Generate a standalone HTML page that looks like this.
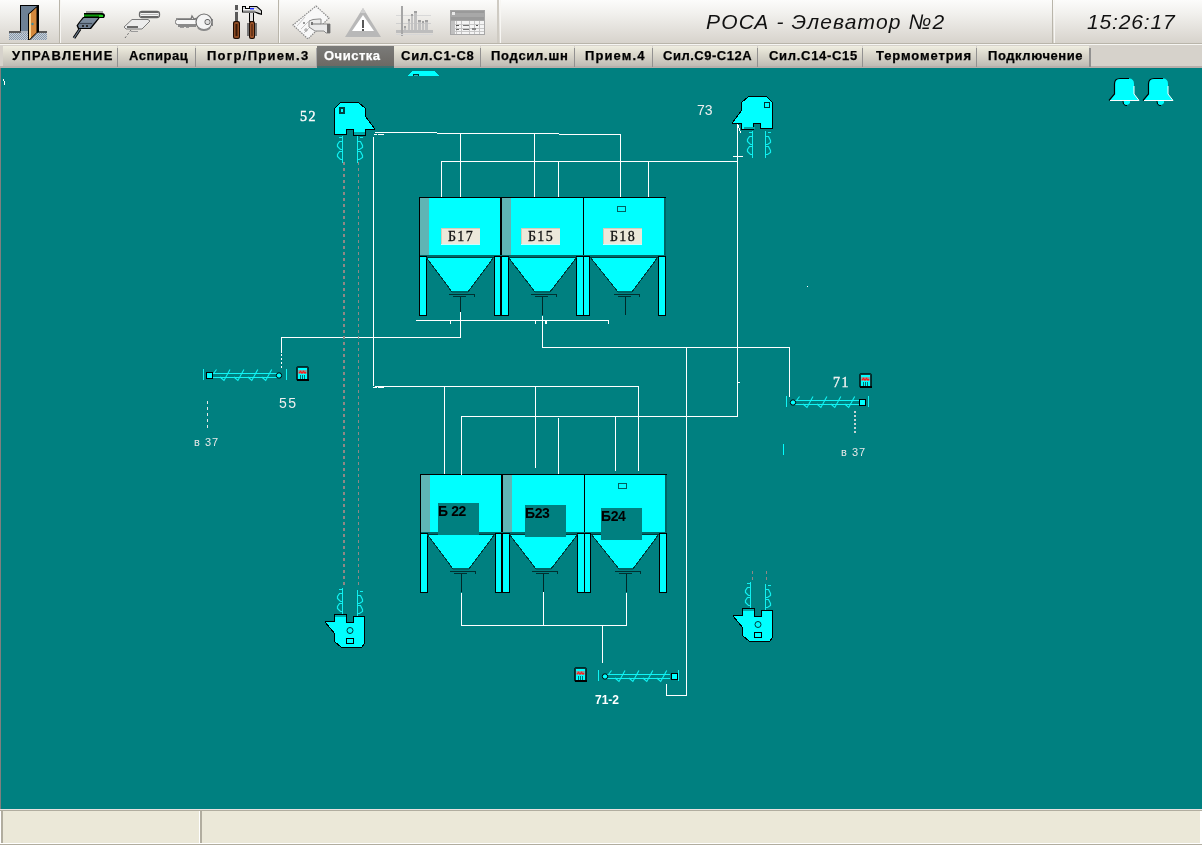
<!DOCTYPE html>
<html><head><meta charset="utf-8">
<style>
*{margin:0;padding:0;box-sizing:border-box}
html,body{width:1202px;height:848px;overflow:hidden;background:#008080;font-family:"Liberation Sans",sans-serif}
#tb{position:absolute;left:0;top:0;width:1202px;height:43px;background:linear-gradient(#fcfcfb,#f2f1ee 30%,#d7d3cc)}
#tbl1{position:absolute;left:0;top:43px;width:1202px;height:1px;background:#b9b5aa}
#tbl2{position:absolute;left:0;top:44px;width:1202px;height:1px;background:#f7f6f3}
.sep{position:absolute;top:0;width:1px;height:43px;background:#b9b5aa}
.sepw{position:absolute;top:0;width:1px;height:43px;background:#f7f6f3}
#tabs{position:absolute;left:0;top:45px;width:1202px;height:23px;background:#d6d2cb}
#tabsb{position:absolute;left:0;top:66px;width:1202px;height:2px;background:#b7afab}
.tab{position:absolute;top:46px;height:20px;background:linear-gradient(#f0eee1,#dcd9cd 40%,#bfbcb5);font-weight:bold;font-size:13px;line-height:20px;color:#000;white-space:nowrap}
.tab span{position:absolute;top:0;will-change:transform;-webkit-text-stroke:0.25px currentColor}
.tsep{position:absolute;top:48px;width:1px;height:19px;background:#929190}
.act{background:linear-gradient(#7b7b79,#6c6964);color:#fff}
#title{will-change:transform;position:absolute;left:706px;top:10px;font-style:italic;font-size:21px;letter-spacing:1.15px;color:#111;white-space:nowrap}
#clock{will-change:transform;position:absolute;left:1087px;top:10px;font-style:italic;font-size:21px;letter-spacing:0.85px;color:#111;white-space:nowrap}
#main{position:absolute;left:0;top:68px;width:1202px;height:741px;background:#008080}
#lb{position:absolute;left:0;top:68px;width:1px;height:741px;background:#7f7f7f}
#sb{position:absolute;left:0;top:809px;width:1202px;height:39px;background:#fff}
.lbl{position:absolute;color:#fff;font-size:12px;white-space:nowrap}
</style></head><body>
<div id="tb"></div>
<div id="tbl1"></div><div id="tbl2"></div>
<div class="sep" style="left:59px"></div><div class="sepw" style="left:60px"></div>
<div class="sep" style="left:278px"></div><div class="sepw" style="left:279px"></div>
<div class="sep" style="left:497px;width:2px;background:#cfcbc3"></div><div class="sepw" style="left:500px"></div>
<div class="sep" style="left:1052px"></div><div class="sepw" style="left:1054px"></div>
<div id="title">РОСА - Элеватор №2</div>
<div id="clock">15:26:17</div>

<div id="tabs"></div>
<div id="tabsb"></div>
<div class="tab" style="left:3px;width:114px"><span style="left:9px;letter-spacing:1.3px">УПРАВЛЕНИЕ</span></div><div class="tsep" style="left:117px"></div>
<div class="tab" style="left:118px;width:77px"><span style="left:11px;letter-spacing:0.55px">Аспирац</span></div><div class="tsep" style="left:195px"></div>
<div class="tab" style="left:196px;width:121px"><span style="left:11px;letter-spacing:1.28px">Погр/Прием.3</span></div>
<div class="tsep" style="left:316px;background:#a9a9a9"></div><div style="position:absolute;left:317px;top:66px;width:77px;height:2px;background:#3b7171"></div><div class="tab act" style="left:317px;width:77px"><span style="left:7px;letter-spacing:0.5px">Очистка</span></div>
<div class="tab" style="left:394px;width:86px"><span style="left:7px;letter-spacing:0.75px">Сил.С1-С8</span></div><div class="tsep" style="left:480px"></div>
<div class="tab" style="left:481px;width:93px"><span style="left:10px;letter-spacing:0.73px">Подсил.шн</span></div><div class="tsep" style="left:574px"></div>
<div class="tab" style="left:575px;width:77px"><span style="left:10px;letter-spacing:1.1px">Прием.4</span></div><div class="tsep" style="left:652px"></div>
<div class="tab" style="left:653px;width:104px"><span style="left:10px;letter-spacing:0.52px">Сил.С9-С12А</span></div><div class="tsep" style="left:757px"></div>
<div class="tab" style="left:758px;width:104px"><span style="left:11px;letter-spacing:0.7px">Сил.С14-С15</span></div><div class="tsep" style="left:862px"></div>
<div class="tab" style="left:863px;width:113px"><span style="left:13px;letter-spacing:0.9px">Термометрия</span></div><div class="tsep" style="left:976px"></div>
<div class="tab" style="left:977px;width:112px"><span style="left:11px;letter-spacing:0.58px">Подключение</span></div><div class="tsep" style="left:1089px;width:2px"></div>

<div id="main"></div>
<div id="lb"></div>
<svg id="dg" width="1202" height="848" style="position:absolute;left:0;top:0;will-change:transform" shape-rendering="crispEdges">
<rect x="419" y="197" width="247" height="60" fill="#000"/>
<rect x="420" y="198" width="245" height="57" fill="#00ffff"/>
<rect x="420" y="198" width="9" height="57" fill="#5fb5b5"/>
<rect x="502" y="198" width="9" height="57" fill="#5fb5b5"/>
<rect x="500" y="197" width="2" height="60" fill="#000"/>
<rect x="583" y="197" width="1" height="60" fill="#000"/>
<rect x="664" y="198" width="2" height="58" fill="#006464"/>
<rect x="420" y="255" width="245" height="2" fill="#006868"/>
<rect x="419" y="256" width="8" height="60" fill="#000"/>
<rect x="420" y="257" width="6" height="58" fill="#00ffff"/>
<rect x="494" y="256" width="7" height="60" fill="#000"/>
<rect x="495" y="257" width="5" height="58" fill="#00ffff"/>
<rect x="501" y="256" width="8" height="60" fill="#000"/>
<rect x="502" y="257" width="6" height="58" fill="#00ffff"/>
<rect x="576" y="256" width="8" height="60" fill="#000"/>
<rect x="577" y="257" width="6" height="58" fill="#00ffff"/>
<rect x="583" y="256" width="7" height="60" fill="#000"/>
<rect x="584" y="257" width="5" height="58" fill="#00ffff"/>
<rect x="658" y="256" width="8" height="60" fill="#000"/>
<rect x="659" y="257" width="6" height="58" fill="#00ffff"/>
<polygon points="426,257 494,257 468,292 452,292" fill="#00ffff" stroke="#003838" stroke-width="1" stroke-width="1"/>
<rect x="452" y="291" width="16" height="2" fill="#006464"/>
<rect x="449" y="294" width="26" height="1" fill="#003030"/>
<rect x="474" y="294" width="1" height="3" fill="#003030"/>
<rect x="453" y="296" width="13" height="1" fill="#003030"/>
<rect x="460" y="297" width="1" height="18" fill="#002828"/>
<polygon points="508,257 577,257 550,292 535,292" fill="#00ffff" stroke="#003838" stroke-width="1" stroke-width="1"/>
<rect x="535" y="291" width="15" height="2" fill="#006464"/>
<rect x="531" y="294" width="26" height="1" fill="#003030"/>
<rect x="556" y="294" width="1" height="3" fill="#003030"/>
<rect x="535" y="296" width="13" height="1" fill="#003030"/>
<rect x="542" y="297" width="1" height="18" fill="#002828"/>
<polygon points="590,257 658,257 632,292 618,292" fill="#00ffff" stroke="#003838" stroke-width="1" stroke-width="1"/>
<rect x="618" y="291" width="14" height="2" fill="#006464"/>
<rect x="614" y="294" width="26" height="1" fill="#003030"/>
<rect x="639" y="294" width="1" height="3" fill="#003030"/>
<rect x="618" y="296" width="13" height="1" fill="#003030"/>
<rect x="625" y="297" width="1" height="18" fill="#002828"/>
<rect x="441" y="228" width="39" height="17" fill="#d6cbb8"/>
<rect x="442" y="229" width="38" height="15" fill="#ece8da"/>
<rect x="441" y="244" width="39" height="1" fill="#c8ffff"/>
<text x="461" y="241" style="font:14px 'Liberation Serif';fill:#111;text-anchor:middle;letter-spacing:1.4px;stroke:#111;stroke-width:0.3">Б17</text>
<rect x="521" y="228" width="39" height="17" fill="#d6cbb8"/>
<rect x="522" y="229" width="38" height="15" fill="#ece8da"/>
<rect x="521" y="244" width="39" height="1" fill="#c8ffff"/>
<text x="541" y="241" style="font:14px 'Liberation Serif';fill:#111;text-anchor:middle;letter-spacing:1.4px;stroke:#111;stroke-width:0.3">Б15</text>
<rect x="603" y="228" width="39" height="17" fill="#d6cbb8"/>
<rect x="604" y="229" width="38" height="15" fill="#ece8da"/>
<rect x="603" y="244" width="39" height="1" fill="#c8ffff"/>
<text x="623" y="241" style="font:14px 'Liberation Serif';fill:#111;text-anchor:middle;letter-spacing:1.4px;stroke:#111;stroke-width:0.3">Б18</text>
<rect x="617" y="206" width="9" height="6" fill="#006060"/>
<rect x="618" y="207" width="7" height="4" fill="#00ffff"/>
<rect x="420" y="474" width="247" height="60" fill="#000"/>
<rect x="421" y="475" width="245" height="57" fill="#00ffff"/>
<rect x="421" y="475" width="9" height="57" fill="#5fb5b5"/>
<rect x="503" y="475" width="9" height="57" fill="#5fb5b5"/>
<rect x="501" y="474" width="2" height="60" fill="#000"/>
<rect x="584" y="474" width="1" height="60" fill="#000"/>
<rect x="665" y="475" width="2" height="58" fill="#006464"/>
<rect x="421" y="532" width="245" height="2" fill="#006868"/>
<rect x="420" y="533" width="8" height="60" fill="#000"/>
<rect x="421" y="534" width="6" height="58" fill="#00ffff"/>
<rect x="495" y="533" width="7" height="60" fill="#000"/>
<rect x="496" y="534" width="5" height="58" fill="#00ffff"/>
<rect x="502" y="533" width="8" height="60" fill="#000"/>
<rect x="503" y="534" width="6" height="58" fill="#00ffff"/>
<rect x="577" y="533" width="8" height="60" fill="#000"/>
<rect x="578" y="534" width="6" height="58" fill="#00ffff"/>
<rect x="584" y="533" width="7" height="60" fill="#000"/>
<rect x="585" y="534" width="5" height="58" fill="#00ffff"/>
<rect x="659" y="533" width="8" height="60" fill="#000"/>
<rect x="660" y="534" width="6" height="58" fill="#00ffff"/>
<polygon points="427,534 495,534 469,569 453,569" fill="#00ffff" stroke="#003838" stroke-width="1" stroke-width="1"/>
<rect x="453" y="568" width="16" height="2" fill="#006464"/>
<rect x="450" y="571" width="26" height="1" fill="#003030"/>
<rect x="475" y="571" width="1" height="3" fill="#003030"/>
<rect x="454" y="573" width="13" height="1" fill="#003030"/>
<rect x="461" y="574" width="1" height="18" fill="#002828"/>
<polygon points="509,534 578,534 551,569 536,569" fill="#00ffff" stroke="#003838" stroke-width="1" stroke-width="1"/>
<rect x="536" y="568" width="15" height="2" fill="#006464"/>
<rect x="532" y="571" width="26" height="1" fill="#003030"/>
<rect x="557" y="571" width="1" height="3" fill="#003030"/>
<rect x="536" y="573" width="13" height="1" fill="#003030"/>
<rect x="543" y="574" width="1" height="18" fill="#002828"/>
<polygon points="591,534 659,534 633,569 619,569" fill="#00ffff" stroke="#003838" stroke-width="1" stroke-width="1"/>
<rect x="619" y="568" width="14" height="2" fill="#006464"/>
<rect x="615" y="571" width="26" height="1" fill="#003030"/>
<rect x="640" y="571" width="1" height="3" fill="#003030"/>
<rect x="619" y="573" width="13" height="1" fill="#003030"/>
<rect x="626" y="574" width="1" height="18" fill="#002828"/>
<rect x="438" y="503" width="41" height="32" fill="#008080"/>
<text x="438" y="516" style="font:bold 14px 'Liberation Sans';fill:#000;letter-spacing:-0.4px">Б 22</text>
<rect x="525" y="505" width="41" height="32" fill="#008080"/>
<text x="525" y="518" style="font:bold 14px 'Liberation Sans';fill:#000;letter-spacing:-0.4px">Б23</text>
<rect x="601" y="508" width="41" height="32" fill="#008080"/>
<text x="601" y="521" style="font:bold 14px 'Liberation Sans';fill:#000;letter-spacing:-0.4px">Б24</text>
<rect x="618" y="483" width="9" height="6" fill="#006060"/>
<rect x="619" y="484" width="7" height="4" fill="#00ffff"/>
<rect x="375" y="132" width="62" height="1" fill="#fff"/>
<rect x="437" y="133" width="122" height="1" fill="#fff"/>
<rect x="559" y="134" width="62" height="1" fill="#fff"/>
<rect x="374" y="134" width="3" height="1" fill="#fff"/>
<rect x="378" y="134" width="6" height="1" fill="#fff"/>
<rect x="373" y="137" width="1" height="249" fill="#fff"/>
<rect x="373" y="387" width="4" height="1" fill="#fff"/>
<rect x="378" y="387" width="6" height="1" fill="#fff"/>
<rect x="375" y="386" width="264" height="1" fill="#fff"/>
<rect x="460" y="133" width="1" height="64" fill="#fff"/>
<rect x="441" y="161" width="1" height="36" fill="#fff"/>
<rect x="441" y="161" width="296" height="1" fill="#fff"/>
<rect x="534" y="133" width="1" height="64" fill="#fff"/>
<rect x="558" y="161" width="1" height="36" fill="#fff"/>
<rect x="620" y="135" width="1" height="62" fill="#fff"/>
<rect x="648" y="161" width="1" height="36" fill="#fff"/>
<rect x="737" y="124" width="1" height="293" fill="#fff"/>
<rect x="733" y="156" width="10" height="1" fill="#fff"/>
<rect x="738" y="125" width="1" height="3" fill="#fff"/>
<rect x="739" y="128" width="1" height="3" fill="#fff"/>
<rect x="740" y="131" width="1" height="2" fill="#fff"/>
<rect x="416" y="320" width="193" height="1" fill="#fff"/>
<rect x="608" y="321" width="1" height="3" fill="#fff"/>
<rect x="450" y="321" width="1" height="3" fill="#fff"/>
<rect x="535" y="321" width="1" height="3" fill="#fff"/>
<rect x="545" y="321" width="1" height="3" fill="#fff"/>
<rect x="546" y="321" width="1" height="3" fill="#fff"/>
<rect x="460" y="312" width="1" height="26" fill="#fff"/>
<rect x="281" y="337" width="180" height="1" fill="#fff"/>
<rect x="281" y="338" width="1" height="15" fill="#fff"/>
<rect x="281" y="354" width="1" height="2" fill="#fff"/>
<rect x="281" y="358" width="1" height="2" fill="#fff"/>
<rect x="281" y="362" width="1" height="2" fill="#fff"/>
<rect x="281" y="366" width="1" height="2" fill="#fff"/>
<rect x="542" y="316" width="1" height="32" fill="#fff"/>
<rect x="542" y="347" width="248" height="1" fill="#fff"/>
<rect x="789" y="348" width="1" height="49" fill="#fff"/>
<rect x="444" y="387" width="1" height="87" fill="#fff"/>
<rect x="535" y="387" width="1" height="81" fill="#fff"/>
<rect x="638" y="387" width="1" height="84" fill="#fff"/>
<rect x="461" y="416" width="276" height="1" fill="#fff"/>
<rect x="461" y="417" width="1" height="58" fill="#fff"/>
<rect x="558" y="418" width="1" height="56" fill="#fff"/>
<rect x="615" y="417" width="1" height="54" fill="#fff"/>
<rect x="686" y="348" width="1" height="348" fill="#fff"/>
<rect x="666" y="695" width="21" height="1" fill="#fff"/>
<rect x="666" y="684" width="1" height="11" fill="#fff"/>
<rect x="738" y="382" width="2" height="1" fill="#fff"/>
<rect x="461" y="593" width="1" height="33" fill="#fff"/>
<rect x="543" y="592" width="1" height="34" fill="#fff"/>
<rect x="626" y="593" width="1" height="33" fill="#fff"/>
<rect x="461" y="625" width="166" height="1" fill="#fff"/>
<rect x="602" y="626" width="1" height="37" fill="#fff"/>
<rect x="207" y="401" width="1" height="3" fill="#e8e8e8"/>
<rect x="207" y="407" width="1" height="3" fill="#e8e8e8"/>
<rect x="207" y="413" width="1" height="3" fill="#e8e8e8"/>
<rect x="207" y="419" width="1" height="3" fill="#e8e8e8"/>
<rect x="207" y="425" width="1" height="3" fill="#e8e8e8"/>
<rect x="854" y="411" width="2" height="2" fill="#c8d4d4"/>
<rect x="854" y="415" width="2" height="2" fill="#c8d4d4"/>
<rect x="854" y="419" width="2" height="2" fill="#c8d4d4"/>
<rect x="854" y="423" width="2" height="2" fill="#c8d4d4"/>
<rect x="854" y="427" width="2" height="2" fill="#c8d4d4"/>
<rect x="854" y="431" width="2" height="2" fill="#c8d4d4"/>
<rect x="343" y="162" width="2" height="3" fill="#8e8886"/>
<rect x="358" y="162" width="1" height="3" fill="#8e8886"/>
<rect x="343" y="168" width="2" height="3" fill="#8e8886"/>
<rect x="358" y="168" width="1" height="3" fill="#8e8886"/>
<rect x="343" y="174" width="2" height="3" fill="#8e8886"/>
<rect x="358" y="174" width="1" height="3" fill="#8e8886"/>
<rect x="343" y="180" width="2" height="3" fill="#8e8886"/>
<rect x="358" y="180" width="1" height="3" fill="#8e8886"/>
<rect x="343" y="186" width="2" height="3" fill="#8e8886"/>
<rect x="358" y="186" width="1" height="3" fill="#8e8886"/>
<rect x="343" y="192" width="2" height="3" fill="#8e8886"/>
<rect x="358" y="192" width="1" height="3" fill="#8e8886"/>
<rect x="343" y="198" width="2" height="3" fill="#8e8886"/>
<rect x="358" y="198" width="1" height="3" fill="#8e8886"/>
<rect x="343" y="204" width="2" height="3" fill="#8e8886"/>
<rect x="358" y="204" width="1" height="3" fill="#8e8886"/>
<rect x="343" y="210" width="2" height="3" fill="#8e8886"/>
<rect x="358" y="210" width="1" height="3" fill="#8e8886"/>
<rect x="343" y="216" width="2" height="3" fill="#8e8886"/>
<rect x="358" y="216" width="1" height="3" fill="#8e8886"/>
<rect x="343" y="222" width="2" height="3" fill="#8e8886"/>
<rect x="358" y="222" width="1" height="3" fill="#8e8886"/>
<rect x="343" y="228" width="2" height="3" fill="#8e8886"/>
<rect x="358" y="228" width="1" height="3" fill="#8e8886"/>
<rect x="343" y="234" width="2" height="3" fill="#8e8886"/>
<rect x="358" y="234" width="1" height="3" fill="#8e8886"/>
<rect x="343" y="240" width="2" height="3" fill="#8e8886"/>
<rect x="358" y="240" width="1" height="3" fill="#8e8886"/>
<rect x="343" y="246" width="2" height="3" fill="#8e8886"/>
<rect x="358" y="246" width="1" height="3" fill="#8e8886"/>
<rect x="343" y="252" width="2" height="3" fill="#8e8886"/>
<rect x="358" y="252" width="1" height="3" fill="#8e8886"/>
<rect x="343" y="258" width="2" height="3" fill="#8e8886"/>
<rect x="358" y="258" width="1" height="3" fill="#8e8886"/>
<rect x="343" y="264" width="2" height="3" fill="#8e8886"/>
<rect x="358" y="264" width="1" height="3" fill="#8e8886"/>
<rect x="343" y="270" width="2" height="3" fill="#8e8886"/>
<rect x="358" y="270" width="1" height="3" fill="#8e8886"/>
<rect x="343" y="276" width="2" height="3" fill="#8e8886"/>
<rect x="358" y="276" width="1" height="3" fill="#8e8886"/>
<rect x="343" y="282" width="2" height="3" fill="#8e8886"/>
<rect x="358" y="282" width="1" height="3" fill="#8e8886"/>
<rect x="343" y="288" width="2" height="3" fill="#8e8886"/>
<rect x="358" y="288" width="1" height="3" fill="#8e8886"/>
<rect x="343" y="294" width="2" height="3" fill="#8e8886"/>
<rect x="358" y="294" width="1" height="3" fill="#8e8886"/>
<rect x="343" y="300" width="2" height="3" fill="#8e8886"/>
<rect x="358" y="300" width="1" height="3" fill="#8e8886"/>
<rect x="343" y="306" width="2" height="3" fill="#8e8886"/>
<rect x="358" y="306" width="1" height="3" fill="#8e8886"/>
<rect x="343" y="312" width="2" height="3" fill="#8e8886"/>
<rect x="358" y="312" width="1" height="3" fill="#8e8886"/>
<rect x="343" y="318" width="2" height="3" fill="#8e8886"/>
<rect x="358" y="318" width="1" height="3" fill="#8e8886"/>
<rect x="343" y="324" width="2" height="3" fill="#8e8886"/>
<rect x="358" y="324" width="1" height="3" fill="#8e8886"/>
<rect x="343" y="330" width="2" height="3" fill="#8e8886"/>
<rect x="358" y="330" width="1" height="3" fill="#8e8886"/>
<rect x="343" y="336" width="2" height="3" fill="#8e8886"/>
<rect x="358" y="336" width="1" height="3" fill="#8e8886"/>
<rect x="343" y="342" width="2" height="3" fill="#8e8886"/>
<rect x="358" y="342" width="1" height="3" fill="#8e8886"/>
<rect x="343" y="348" width="2" height="3" fill="#8e8886"/>
<rect x="358" y="348" width="1" height="3" fill="#8e8886"/>
<rect x="343" y="354" width="2" height="3" fill="#8e8886"/>
<rect x="358" y="354" width="1" height="3" fill="#8e8886"/>
<rect x="343" y="360" width="2" height="3" fill="#8e8886"/>
<rect x="358" y="360" width="1" height="3" fill="#8e8886"/>
<rect x="343" y="366" width="2" height="3" fill="#8e8886"/>
<rect x="358" y="366" width="1" height="3" fill="#8e8886"/>
<rect x="343" y="372" width="2" height="3" fill="#8e8886"/>
<rect x="358" y="372" width="1" height="3" fill="#8e8886"/>
<rect x="343" y="378" width="2" height="3" fill="#8e8886"/>
<rect x="358" y="378" width="1" height="3" fill="#8e8886"/>
<rect x="343" y="384" width="2" height="3" fill="#8e8886"/>
<rect x="358" y="384" width="1" height="3" fill="#8e8886"/>
<rect x="343" y="390" width="2" height="3" fill="#8e8886"/>
<rect x="358" y="390" width="1" height="3" fill="#8e8886"/>
<rect x="343" y="396" width="2" height="3" fill="#8e8886"/>
<rect x="358" y="396" width="1" height="3" fill="#8e8886"/>
<rect x="343" y="402" width="2" height="3" fill="#8e8886"/>
<rect x="358" y="402" width="1" height="3" fill="#8e8886"/>
<rect x="343" y="408" width="2" height="3" fill="#8e8886"/>
<rect x="358" y="408" width="1" height="3" fill="#8e8886"/>
<rect x="343" y="414" width="2" height="3" fill="#8e8886"/>
<rect x="358" y="414" width="1" height="3" fill="#8e8886"/>
<rect x="343" y="420" width="2" height="3" fill="#8e8886"/>
<rect x="358" y="420" width="1" height="3" fill="#8e8886"/>
<rect x="343" y="426" width="2" height="3" fill="#8e8886"/>
<rect x="358" y="426" width="1" height="3" fill="#8e8886"/>
<rect x="343" y="432" width="2" height="3" fill="#8e8886"/>
<rect x="358" y="432" width="1" height="3" fill="#8e8886"/>
<rect x="343" y="438" width="2" height="3" fill="#8e8886"/>
<rect x="358" y="438" width="1" height="3" fill="#8e8886"/>
<rect x="343" y="444" width="2" height="3" fill="#8e8886"/>
<rect x="358" y="444" width="1" height="3" fill="#8e8886"/>
<rect x="343" y="450" width="2" height="3" fill="#8e8886"/>
<rect x="358" y="450" width="1" height="3" fill="#8e8886"/>
<rect x="343" y="456" width="2" height="3" fill="#8e8886"/>
<rect x="358" y="456" width="1" height="3" fill="#8e8886"/>
<rect x="343" y="462" width="2" height="3" fill="#8e8886"/>
<rect x="358" y="462" width="1" height="3" fill="#8e8886"/>
<rect x="343" y="468" width="2" height="3" fill="#8e8886"/>
<rect x="358" y="468" width="1" height="3" fill="#8e8886"/>
<rect x="343" y="474" width="2" height="3" fill="#8e8886"/>
<rect x="358" y="474" width="1" height="3" fill="#8e8886"/>
<rect x="343" y="480" width="2" height="3" fill="#8e8886"/>
<rect x="358" y="480" width="1" height="3" fill="#8e8886"/>
<rect x="343" y="486" width="2" height="3" fill="#8e8886"/>
<rect x="358" y="486" width="1" height="3" fill="#8e8886"/>
<rect x="343" y="492" width="2" height="3" fill="#8e8886"/>
<rect x="358" y="492" width="1" height="3" fill="#8e8886"/>
<rect x="343" y="498" width="2" height="3" fill="#8e8886"/>
<rect x="358" y="498" width="1" height="3" fill="#8e8886"/>
<rect x="343" y="504" width="2" height="3" fill="#8e8886"/>
<rect x="358" y="504" width="1" height="3" fill="#8e8886"/>
<rect x="343" y="510" width="2" height="3" fill="#8e8886"/>
<rect x="358" y="510" width="1" height="3" fill="#8e8886"/>
<rect x="343" y="516" width="2" height="3" fill="#8e8886"/>
<rect x="358" y="516" width="1" height="3" fill="#8e8886"/>
<rect x="343" y="522" width="2" height="3" fill="#8e8886"/>
<rect x="358" y="522" width="1" height="3" fill="#8e8886"/>
<rect x="343" y="528" width="2" height="3" fill="#8e8886"/>
<rect x="358" y="528" width="1" height="3" fill="#8e8886"/>
<rect x="343" y="534" width="2" height="3" fill="#8e8886"/>
<rect x="358" y="534" width="1" height="3" fill="#8e8886"/>
<rect x="343" y="540" width="2" height="3" fill="#8e8886"/>
<rect x="358" y="540" width="1" height="3" fill="#8e8886"/>
<rect x="343" y="546" width="2" height="3" fill="#8e8886"/>
<rect x="358" y="546" width="1" height="3" fill="#8e8886"/>
<rect x="343" y="552" width="2" height="3" fill="#8e8886"/>
<rect x="358" y="552" width="1" height="3" fill="#8e8886"/>
<rect x="343" y="558" width="2" height="3" fill="#8e8886"/>
<rect x="358" y="558" width="1" height="3" fill="#8e8886"/>
<rect x="343" y="564" width="2" height="3" fill="#8e8886"/>
<rect x="358" y="564" width="1" height="3" fill="#8e8886"/>
<rect x="343" y="570" width="2" height="3" fill="#8e8886"/>
<rect x="358" y="570" width="1" height="3" fill="#8e8886"/>
<rect x="343" y="576" width="2" height="3" fill="#8e8886"/>
<rect x="358" y="576" width="1" height="3" fill="#8e8886"/>
<rect x="343" y="582" width="2" height="3" fill="#8e8886"/>
<rect x="358" y="582" width="1" height="3" fill="#8e8886"/>
<rect x="752" y="571" width="1" height="3" fill="#8e8886"/>
<rect x="766" y="571" width="1" height="3" fill="#8e8886"/>
<rect x="752" y="577" width="1" height="3" fill="#8e8886"/>
<rect x="766" y="577" width="1" height="3" fill="#8e8886"/>
<polygon points="340.5,102.5 358.5,102.5 365.5,108.5 365.5,116.5 374.5,128.5 374.5,129.5 365.5,129.5 365.5,135.5 353.5,135.5 353.5,129.5 346.5,129.5 346.5,134.5 334.5,134.5 334.5,108.5" fill="#00ffff" stroke="#000" stroke-width="1" />
<rect x="354" y="132" width="11" height="3" fill="#00a8a8"/>
<rect x="339" y="107" width="6" height="7" fill="#004040"/>
<rect x="341" y="109" width="2" height="3" fill="#00ffff"/>
<polygon points="766.5,96.5 748.5,96.5 741.5,102.5 741.5,110.5 732.5,122.5 732.5,123.5 741.5,123.5 741.5,129.5 753.5,129.5 753.5,123.5 760.5,123.5 760.5,128.5 772.5,128.5 772.5,102.5" fill="#00ffff" stroke="#000" stroke-width="1" />
<rect x="744" y="127" width="11" height="2" fill="#00a8a8"/>
<rect x="764" y="102" width="6" height="6" fill="#003030"/>
<rect x="765" y="103" width="4" height="4" fill="#00ffff"/>
<rect x="342" y="136" width="1" height="27" fill="#10f0f0"/>
<path d="M342.5,141.5 L339.5,141.5 L337.5,144.5 L337.5,146.5 L340.5,149.5 L342.5,149.5" fill="none" stroke="#10f0f0" stroke-width="1.2" shape-rendering="auto"/>
<path d="M342.5,151.5 L339.5,151.5 L337.5,154.5 L337.5,156.5 L340.5,159.5 L342.5,159.5" fill="none" stroke="#10f0f0" stroke-width="1.2" shape-rendering="auto"/>
<rect x="339" y="137" width="3" height="1" fill="#10f0f0"/>
<rect x="357" y="136" width="1" height="27" fill="#10f0f0"/>
<path d="M357.5,141.5 L360.5,141.5 L362.5,145.5 L362.5,147.5 L359.5,149.5 L357.5,149.5" fill="none" stroke="#10f0f0" stroke-width="1.2" shape-rendering="auto"/>
<path d="M357.5,151.5 L360.5,151.5 L362.5,155.5 L362.5,157.5 L359.5,159.5 L357.5,159.5" fill="none" stroke="#10f0f0" stroke-width="1.2" shape-rendering="auto"/>
<rect x="360" y="137" width="3" height="1" fill="#10f0f0"/>
<rect x="752" y="131" width="1" height="27" fill="#10f0f0"/>
<path d="M752.5,136.5 L749.5,136.5 L747.5,139.5 L747.5,141.5 L750.5,144.5 L752.5,144.5" fill="none" stroke="#10f0f0" stroke-width="1.2" shape-rendering="auto"/>
<path d="M752.5,146.5 L749.5,146.5 L747.5,149.5 L747.5,151.5 L750.5,154.5 L752.5,154.5" fill="none" stroke="#10f0f0" stroke-width="1.2" shape-rendering="auto"/>
<rect x="749" y="132" width="3" height="1" fill="#10f0f0"/>
<rect x="765" y="131" width="1" height="27" fill="#10f0f0"/>
<path d="M765.5,136.5 L768.5,136.5 L770.5,140.5 L770.5,142.5 L767.5,144.5 L765.5,144.5" fill="none" stroke="#10f0f0" stroke-width="1.2" shape-rendering="auto"/>
<path d="M765.5,146.5 L768.5,146.5 L770.5,150.5 L770.5,152.5 L767.5,154.5 L765.5,154.5" fill="none" stroke="#10f0f0" stroke-width="1.2" shape-rendering="auto"/>
<rect x="768" y="132" width="3" height="1" fill="#10f0f0"/>
<rect x="342" y="588" width="1" height="27" fill="#10f0f0"/>
<path d="M342.5,593.5 L339.5,593.5 L337.5,596.5 L337.5,598.5 L340.5,601.5 L342.5,601.5" fill="none" stroke="#10f0f0" stroke-width="1.2" shape-rendering="auto"/>
<path d="M342.5,603.5 L339.5,603.5 L337.5,606.5 L337.5,608.5 L340.5,611.5 L342.5,611.5" fill="none" stroke="#10f0f0" stroke-width="1.2" shape-rendering="auto"/>
<rect x="339" y="589" width="3" height="1" fill="#10f0f0"/>
<rect x="357" y="590" width="1" height="27" fill="#10f0f0"/>
<path d="M357.5,595.5 L360.5,595.5 L362.5,599.5 L362.5,601.5 L359.5,603.5 L357.5,603.5" fill="none" stroke="#10f0f0" stroke-width="1.2" shape-rendering="auto"/>
<path d="M357.5,605.5 L360.5,605.5 L362.5,609.5 L362.5,611.5 L359.5,613.5 L357.5,613.5" fill="none" stroke="#10f0f0" stroke-width="1.2" shape-rendering="auto"/>
<rect x="360" y="591" width="3" height="1" fill="#10f0f0"/>
<rect x="750" y="582" width="1" height="27" fill="#10f0f0"/>
<path d="M750.5,587.5 L747.5,587.5 L745.5,590.5 L745.5,592.5 L748.5,595.5 L750.5,595.5" fill="none" stroke="#10f0f0" stroke-width="1.2" shape-rendering="auto"/>
<path d="M750.5,597.5 L747.5,597.5 L745.5,600.5 L745.5,602.5 L748.5,605.5 L750.5,605.5" fill="none" stroke="#10f0f0" stroke-width="1.2" shape-rendering="auto"/>
<rect x="747" y="583" width="3" height="1" fill="#10f0f0"/>
<rect x="765" y="584" width="1" height="27" fill="#10f0f0"/>
<path d="M765.5,589.5 L768.5,589.5 L770.5,593.5 L770.5,595.5 L767.5,597.5 L765.5,597.5" fill="none" stroke="#10f0f0" stroke-width="1.2" shape-rendering="auto"/>
<path d="M765.5,599.5 L768.5,599.5 L770.5,603.5 L770.5,605.5 L767.5,607.5 L765.5,607.5" fill="none" stroke="#10f0f0" stroke-width="1.2" shape-rendering="auto"/>
<rect x="768" y="585" width="3" height="1" fill="#10f0f0"/>
<polygon points="334.5,614.5 346.5,614.5 346.5,622.5 353.5,622.5 353.5,616.5 364.5,616.5 364.5,643.5 361.5,647.5 341.5,647.5 334.5,641.5 334.5,633.5 325.5,622.5 325.5,621.5 334.5,621.5" fill="#00ffff" stroke="#000" stroke-width="1" />
<rect x="335" y="615" width="11" height="2" fill="#00a8a8"/>
<circle cx="350" cy="630.5" r="3" fill="#00ffff" stroke="#003838" stroke-width="1" shape-rendering="auto"/>
<rect x="346.5" y="638.5" width="7" height="5" fill="#00ffff" stroke="#000" stroke-width="1"/>
<polygon points="742.5,608.5 754.5,608.5 754.5,616.5 761.5,616.5 761.5,610.5 772.5,610.5 772.5,637.5 769.5,641.5 749.5,641.5 742.5,635.5 742.5,627.5 733.5,616.5 733.5,615.5 742.5,615.5" fill="#00ffff" stroke="#000" stroke-width="1" />
<rect x="743" y="609" width="11" height="2" fill="#00a8a8"/>
<circle cx="758" cy="624.5" r="3" fill="#00ffff" stroke="#003838" stroke-width="1" shape-rendering="auto"/>
<rect x="754.5" y="632.5" width="7" height="5" fill="#00ffff" stroke="#000" stroke-width="1"/>
<rect x="203" y="369" width="1" height="11" fill="#10f4f4"/>
<rect x="286" y="369" width="1" height="11" fill="#10f4f4"/>
<rect x="211" y="373" width="67" height="1" fill="#10f4f4"/>
<rect x="211" y="377" width="67" height="1" fill="#10f4f4"/>
<path d="M213.5,373.5 L216.5,369.5" stroke="#10f4f4" stroke-width="1.1" fill="none" shape-rendering="auto"/>
<path d="M220.0,377 L224.0,380.5 L230.0,369.5" stroke="#10f4f4" stroke-width="1.1" fill="none" shape-rendering="auto"/>
<path d="M233.9,377 L237.9,380.5 L243.9,369.5" stroke="#10f4f4" stroke-width="1.1" fill="none" shape-rendering="auto"/>
<path d="M247.8,377 L251.8,380.5 L257.8,369.5" stroke="#10f4f4" stroke-width="1.1" fill="none" shape-rendering="auto"/>
<path d="M261.7,377 L265.7,380.5 L271.7,369.5" stroke="#10f4f4" stroke-width="1.1" fill="none" shape-rendering="auto"/>
<rect x="206" y="372" width="7" height="7" fill="#000"/>
<rect x="207" y="373" width="5" height="5" fill="#00ffff"/>
<circle cx="279" cy="375.5" r="2.7" fill="#00ffff" stroke="#000" stroke-width="1" shape-rendering="auto"/>
<rect x="786" y="396" width="1" height="11" fill="#10f4f4"/>
<rect x="868" y="396" width="1" height="11" fill="#10f4f4"/>
<rect x="794" y="400" width="66" height="1" fill="#10f4f4"/>
<rect x="794" y="404" width="66" height="1" fill="#10f4f4"/>
<path d="M796.5,400.5 L799.5,396.5" stroke="#10f4f4" stroke-width="1.1" fill="none" shape-rendering="auto"/>
<path d="M803.0,404 L807.0,407.5 L813.0,396.5" stroke="#10f4f4" stroke-width="1.1" fill="none" shape-rendering="auto"/>
<path d="M816.9,404 L820.9,407.5 L826.9,396.5" stroke="#10f4f4" stroke-width="1.1" fill="none" shape-rendering="auto"/>
<path d="M830.8,404 L834.8,407.5 L840.8,396.5" stroke="#10f4f4" stroke-width="1.1" fill="none" shape-rendering="auto"/>
<path d="M844.7,404 L848.7,407.5 L854.7,396.5" stroke="#10f4f4" stroke-width="1.1" fill="none" shape-rendering="auto"/>
<rect x="859" y="399" width="7" height="7" fill="#000"/>
<rect x="860" y="400" width="5" height="5" fill="#00ffff"/>
<circle cx="793" cy="402.5" r="2.7" fill="#00ffff" stroke="#000" stroke-width="1" shape-rendering="auto"/>
<rect x="598" y="670" width="1" height="11" fill="#10f4f4"/>
<rect x="678" y="670" width="1" height="11" fill="#10f4f4"/>
<rect x="606" y="674" width="64" height="1" fill="#10f4f4"/>
<rect x="606" y="678" width="64" height="1" fill="#10f4f4"/>
<path d="M608.5,674.5 L611.5,670.5" stroke="#10f4f4" stroke-width="1.1" fill="none" shape-rendering="auto"/>
<path d="M615.0,678 L619.0,681.5 L625.0,670.5" stroke="#10f4f4" stroke-width="1.1" fill="none" shape-rendering="auto"/>
<path d="M628.9,678 L632.9,681.5 L638.9,670.5" stroke="#10f4f4" stroke-width="1.1" fill="none" shape-rendering="auto"/>
<path d="M642.8,678 L646.8,681.5 L652.8,670.5" stroke="#10f4f4" stroke-width="1.1" fill="none" shape-rendering="auto"/>
<path d="M656.7,678 L660.7,681.5 L666.7,670.5" stroke="#10f4f4" stroke-width="1.1" fill="none" shape-rendering="auto"/>
<rect x="671" y="673" width="7" height="7" fill="#000"/>
<rect x="672" y="674" width="5" height="5" fill="#00ffff"/>
<circle cx="605" cy="676.5" r="2.7" fill="#00ffff" stroke="#000" stroke-width="1" shape-rendering="auto"/>
<rect x="296.5" y="366.5" width="12" height="14" rx="1.5" fill="#0a3a3a" stroke="#002a2a" stroke-width="1" shape-rendering="auto"/>
<rect x="298" y="368" width="9" height="2" fill="#00ffff"/>
<rect x="298" y="370" width="9" height="4" fill="#70b4b4"/>
<rect x="299" y="370" width="7" height="1" fill="#909898"/>
<path d="M299,373 L300.5,371.5 L302,373 L303.5,371.5 L305,373 L306,372" stroke="#ff1818" fill="none" stroke-width="1.3" shape-rendering="auto"/>
<rect x="298" y="374" width="9" height="5" fill="#00ffff"/>
<rect x="300" y="375" width="1" height="4" fill="#0a6a6a"/>
<rect x="302" y="375" width="1" height="4" fill="#0a6a6a"/>
<rect x="304" y="375" width="1" height="4" fill="#0a6a6a"/>
<rect x="297" y="379" width="12" height="2" fill="#000"/>
<rect x="859.5" y="373.5" width="12" height="14" rx="1.5" fill="#0a3a3a" stroke="#002a2a" stroke-width="1" shape-rendering="auto"/>
<rect x="861" y="375" width="9" height="2" fill="#00ffff"/>
<rect x="861" y="377" width="9" height="4" fill="#70b4b4"/>
<rect x="862" y="377" width="7" height="1" fill="#909898"/>
<path d="M862,380 L863.5,378.5 L865,380 L866.5,378.5 L868,380 L869,379" stroke="#ff1818" fill="none" stroke-width="1.3" shape-rendering="auto"/>
<rect x="861" y="381" width="9" height="5" fill="#00ffff"/>
<rect x="863" y="382" width="1" height="4" fill="#0a6a6a"/>
<rect x="865" y="382" width="1" height="4" fill="#0a6a6a"/>
<rect x="867" y="382" width="1" height="4" fill="#0a6a6a"/>
<rect x="860" y="386" width="12" height="2" fill="#000"/>
<rect x="574.5" y="667.5" width="12" height="14" rx="1.5" fill="#0a3a3a" stroke="#002a2a" stroke-width="1" shape-rendering="auto"/>
<rect x="576" y="669" width="9" height="2" fill="#00ffff"/>
<rect x="576" y="671" width="9" height="4" fill="#70b4b4"/>
<rect x="577" y="671" width="7" height="1" fill="#909898"/>
<path d="M577,674 L578.5,672.5 L580,674 L581.5,672.5 L583,674 L584,673" stroke="#ff1818" fill="none" stroke-width="1.3" shape-rendering="auto"/>
<rect x="576" y="675" width="9" height="5" fill="#00ffff"/>
<rect x="578" y="676" width="1" height="4" fill="#0a6a6a"/>
<rect x="580" y="676" width="1" height="4" fill="#0a6a6a"/>
<rect x="582" y="676" width="1" height="4" fill="#0a6a6a"/>
<rect x="575" y="680" width="12" height="2" fill="#000"/>
<text x="300" y="121" style="font:14px 'Liberation Serif';fill:#fafafa;letter-spacing:1.5px;stroke:#fafafa;stroke-width:0.4">52</text>
<text x="697" y="115" style="font:14px 'Liberation Sans';fill:#eee">73</text>
<text x="279" y="408" style="font:14px 'Liberation Sans';fill:#eee;letter-spacing:1.5px">55</text>
<text x="833" y="387" style="font:14px 'Liberation Serif';fill:#f0f0f0;letter-spacing:1.5px;stroke:#f0f0f0;stroke-width:0.4">71</text>
<text x="595" y="704" style="font:bold 12px 'Liberation Sans';fill:#fff">71-2</text>
<text x="194" y="446" style="font:11px 'Liberation Sans';fill:#e8e8e8;letter-spacing:1px">в 37</text>
<text x="841" y="456" style="font:11px 'Liberation Sans';fill:#e8e8e8;letter-spacing:1px">в 37</text>
<rect x="783" y="444" width="1" height="11" fill="#00ffff"/>
<rect x="807" y="286" width="1" height="1" fill="#fff"/>
<rect x="3" y="79" width="1" height="2" fill="#fff"/>
<rect x="4" y="81" width="1" height="4" fill="#fff"/>
<polygon points="408,76 412,71 434,71 440,76" fill="#00ffff" />
<rect x="413" y="74" width="6" height="2" fill="#003838"/>
<rect x="414" y="75" width="4" height="1" fill="#30b0b0"/>
<path d="M1109,100.5 L1114.5,94 L1114.5,84 Q1114.5,78.5 1120,78.5 L1129,78.5 Q1134,78.5 1134,84 L1134,94 L1139,100.5 Z" fill="#00ffff" stroke="none" shape-rendering="auto"/>
<path d="M1109,100.5 L1114.5,94 L1114.5,84 Q1114.5,78.5 1120,78.5 L1129,78.5" fill="none" stroke="#000" stroke-width="1.2" shape-rendering="auto"/>
<path d="M1134,86 L1134,94 L1139,100.5 L1110,100.5" fill="none" stroke="#fff" stroke-width="1" shape-rendering="auto"/>
<path d="M1123,101 L1130,101 L1130,103 Q1127,106.5 1124,104 L1123,101 Z" fill="#00ffff" stroke="none" shape-rendering="auto"/>
<path d="M1123,101 L1123.5,104 Q1125,106 1127,105.5" fill="none" stroke="#000" stroke-width="1" shape-rendering="auto"/>
<path d="M1143,100.5 L1148.5,94 L1148.5,84 Q1148.5,78.5 1154,78.5 L1163,78.5 Q1168,78.5 1168,84 L1168,94 L1173,100.5 Z" fill="#00ffff" stroke="none" shape-rendering="auto"/>
<path d="M1143,100.5 L1148.5,94 L1148.5,84 Q1148.5,78.5 1154,78.5 L1163,78.5" fill="none" stroke="#000" stroke-width="1.2" shape-rendering="auto"/>
<path d="M1168,86 L1168,94 L1173,100.5 L1144,100.5" fill="none" stroke="#fff" stroke-width="1" shape-rendering="auto"/>
<path d="M1157,101 L1164,101 L1164,103 Q1161,106.5 1158,104 L1157,101 Z" fill="#00ffff" stroke="none" shape-rendering="auto"/>
<path d="M1157,101 L1157.5,104 Q1159,106 1161,105.5" fill="none" stroke="#000" stroke-width="1" shape-rendering="auto"/>

</svg>
<svg width="500" height="43" style="position:absolute;left:0;top:0">
<rect x="20" y="5" width="19" height="27" fill="#000"/>
<rect x="21" y="6" width="17" height="25" fill="#6d8195"/>
<defs><pattern id="chk" width="2" height="2" patternUnits="userSpaceOnUse"><rect width="2" height="2" fill="#c8d0d8"/><rect width="1" height="1" fill="#8798aa"/><rect x="1" y="1" width="1" height="1" fill="#8798aa"/></pattern></defs>
<rect x="9" y="33" width="38" height="7" fill="url(#chk)"/>
<rect x="9" y="31" width="38" height="2" fill="#585858"/>
<rect x="21" y="31" width="8" height="2" fill="#aab4be"/>
<polygon points="28,14 37,6 39,6 39,32 37,33 30,40 28,40" fill="#000"/>
<polygon points="29,14.5 36.5,7.5 36.5,32.5 29,39.5" fill="#d4883c"/>
<polygon points="29,14.5 31,12.7 31,37.6 29,39.5" fill="#f8d494"/>
<circle cx="32.5" cy="24" r="1.2" fill="#3a8a9a"/>
<rect x="86" y="11" width="17" height="2" fill="#a4a4a4"/>
<path d="M84,13 L102,13 Q105,13 105,16 L104,18 L84,18 Z" fill="#000"/>
<path d="M84,14.5 L101,14.5 Q103.5,14.5 103.5,16.5 L84,16.5 Z" fill="#0a9a0a"/>
<rect x="99" y="15" width="4" height="2" fill="#20d020"/>
<polygon points="83,17 100,17 99,19 91,29 78,29 76.5,25.5 79,22" fill="#000"/>
<polygon points="84,18 98,18 90,28 79,28 78,25.5 80,22.5" fill="#6d7d8f"/>
<polygon points="84,18 98,18 94,22.5 80,22.5" fill="#7a8a9c"/>
<rect x="79" y="23" width="13" height="1" fill="#3e4854"/>
<rect x="82" y="25" width="2" height="2" fill="#2a2a2a"/><rect x="86" y="25" width="2" height="2" fill="#2a2a2a"/>
<path d="M80,29 L74,38" stroke="#000" stroke-width="3"/>
<path d="M80,29 L74,38" stroke="#6c7c8e" stroke-width="1.2"/>
<rect x="139.5" y="11.5" width="20" height="6" rx="2.5" fill="#f4f4f4" stroke="#6a6a6a" stroke-width="1.3"/>
<rect x="141" y="11" width="17" height="2" fill="#666"/><rect x="141" y="16" width="17" height="2" fill="#666"/>
<rect x="141" y="14" width="17" height="1" fill="#bbb" stroke-dasharray="1,1"/>
<polygon points="132,19.5 148,19.5 150,21 142,29 126,29 124,27" fill="#ececec" stroke="#7a7a7a" stroke-width="1"/>
<rect x="127" y="26" width="11" height="2" fill="#6a6a6a"/>
<rect x="131" y="31" width="7" height="1" fill="#9a9a9a"/>
<path d="M131,30 L125,38" stroke="#6a6a6a" stroke-width="1" stroke-dasharray="2,2"/>
<path d="M176,19 L191,19 L192,16 L194,19 L197,18" fill="none" stroke="#777" stroke-width="1.3"/>
<rect x="175.5" y="19.5" width="22" height="5" rx="2" fill="#f6f6f6" stroke="#777" stroke-width="1"/>
<rect x="178" y="24" width="18" height="3" fill="#8a8a8a"/>
<rect x="180" y="27" width="4" height="1" fill="#9a9a9a"/><rect x="186" y="27" width="3" height="1" fill="#9a9a9a"/>
<circle cx="204" cy="22" r="8" fill="#f4f4f4" stroke="#6f6f6f" stroke-width="1.2"/>
<path d="M198,28 Q204,32 210,28" fill="none" stroke="#8a8a8a" stroke-width="2"/>
<rect x="205" y="19.5" width="5" height="5" rx="2" fill="#e0e0e0" stroke="#666" stroke-width="1"/>
<rect x="212" y="19" width="1" height="7" fill="#888"/>
<rect x="235" y="5" width="3" height="16" fill="#5a5a5a"/>
<rect x="234" y="10" width="5" height="2" fill="#e8e8e8"/>
<rect x="233" y="21" width="7" height="18" rx="2" fill="#1c0c04"/>
<rect x="234" y="22" width="5" height="16" rx="1.5" fill="#8c4a22"/>
<rect x="235.5" y="24" width="2" height="12" fill="#3a1a08"/>
<polygon points="242,6 246,6 246,8 249,8 249,6 257,6 262,10.5 262,15 258,14 255,12.5 242,12.5" fill="#000"/>
<polygon points="243,7 245,7 245,9 250,9 250,7 256.5,7 261,11 261,13.5 258,12.5 255,11.5 243,11.5" fill="#d6d6d6"/>
<rect x="243" y="9" width="13" height="1" fill="#f8f8f8"/>
<rect x="243" y="10.5" width="12" height="1" fill="#9a9a9a"/>
<rect x="250" y="8" width="4" height="1.5" fill="#1a2aff"/>
<rect x="249" y="13" width="5" height="9" fill="#000"/>
<rect x="250" y="13" width="3" height="8" fill="#e0e0e0"/>
<rect x="247" y="23" width="10" height="13" fill="#777"/>
<rect x="249" y="21" width="6" height="18" rx="2" fill="#1c0c04"/>
<rect x="250" y="22" width="4" height="16" rx="1.5" fill="#9a5228"/>
<rect x="251.5" y="24" width="1" height="12" fill="#3a1a08"/>
<polygon points="316,6 329,18 308,39 293,25" fill="#f8f8f8" stroke="#8a8a8a" stroke-width="1.2" stroke-dasharray="1.5,1"/>
<path d="M297,26 L305,17 M301,29 L308,22 M304,33 L310,27" stroke="#bbb" stroke-width="0.8"/>
<circle cx="304" cy="23" r="1" fill="#777"/><circle cx="306" cy="30" r="1.2" fill="none" stroke="#999"/>
<path d="M309,21 Q312,19 319,19 L321,19 L321,24 L330,24 L330,33 L326,33 L324,31 L315,31 L309,27 Z" fill="#eaeaea" stroke="#8a8a8a" stroke-width="1"/>
<rect x="327" y="24" width="3" height="9" fill="#707070"/>
<rect x="311" y="22" width="2" height="3" fill="#777"/><path d="M313,24 L321,24" stroke="#777"/>
<polygon points="363,8 381,37 345,37" fill="#b8b8b8"/>
<polygon points="363,15 374,31 352,31" fill="#fff"/>
<polygon points="363,8 366,13 360,13" fill="#d0d0d0"/>
<rect x="362" y="20" width="2" height="8" fill="#585858"/>
<rect x="362" y="29" width="2" height="2" fill="#585858"/>
<rect x="396" y="15" width="35" height="1" fill="#d8d8d8"/>
<rect x="396" y="23" width="35" height="1" fill="#cfcfcf"/>
<rect x="396" y="30" width="37" height="3" fill="#bdbdbd"/>
<rect x="401" y="6" width="2" height="30" fill="#a6a6a6"/>
<rect x="404" y="26" width="2" height="4" fill="#c2c2c2"/>
<rect x="404" y="26" width="2" height="2" fill="#a0a0a0"/>
<rect x="408" y="19" width="2" height="11" fill="#c2c2c2"/>
<rect x="408" y="19" width="2" height="2" fill="#a0a0a0"/>
<rect x="411" y="14" width="2" height="16" fill="#c2c2c2"/>
<rect x="411" y="14" width="2" height="2" fill="#a0a0a0"/>
<rect x="414" y="11" width="3" height="19" fill="#c2c2c2"/>
<rect x="414" y="11" width="3" height="2" fill="#a0a0a0"/>
<rect x="418" y="20" width="3" height="10" fill="#c2c2c2"/>
<rect x="418" y="20" width="3" height="2" fill="#a0a0a0"/>
<rect x="422" y="21" width="2" height="9" fill="#c2c2c2"/>
<rect x="422" y="21" width="2" height="2" fill="#a0a0a0"/>
<rect x="425" y="20" width="3" height="10" fill="#c2c2c2"/>
<rect x="425" y="20" width="3" height="2" fill="#a0a0a0"/>
<rect x="396" y="34" width="37" height="1" fill="#d6d6d6"/>
<rect x="450" y="10" width="35" height="25" fill="#a6a6a6"/>
<rect x="451" y="11" width="33" height="9" fill="#9a9a9a"/><rect x="451" y="13" width="33" height="4" fill="#a8a8a8"/>
<rect x="452" y="12" width="3" height="3" fill="#e8e8e8"/>
<rect x="451" y="21" width="33" height="13" fill="#f4f4f4"/>
<rect x="451" y="24" width="33" height="1" fill="#c8c8c8"/>
<rect x="451" y="28" width="33" height="1" fill="#c8c8c8"/>
<rect x="451" y="31" width="33" height="1" fill="#c8c8c8"/>
<rect x="456" y="21" width="1" height="13" fill="#c4c4c4"/>
<rect x="461" y="21" width="1" height="13" fill="#c4c4c4"/>
<rect x="469" y="21" width="1" height="13" fill="#c4c4c4"/>
<rect x="474" y="21" width="1" height="13" fill="#c4c4c4"/>
<rect x="479" y="21" width="1" height="13" fill="#c4c4c4"/>
<rect x="451" y="21" width="4" height="13" fill="#c0c0c0"/>
<rect x="456" y="25" width="3" height="1" fill="#555"/><rect x="463" y="25" width="6" height="1" fill="#777"/><rect x="476" y="25" width="2" height="1" fill="#555"/>
<rect x="456" y="29" width="3" height="1" fill="#666"/><rect x="463" y="29" width="6" height="1" fill="#777"/><rect x="472" y="28" width="4" height="2" fill="#888"/>
</svg>

<div id="sb">
  <div style="position:absolute;left:0;top:0;width:1202px;height:1px;background:#e9e3e1"></div>
  <div style="position:absolute;left:0;top:1px;width:1202px;height:1px;background:#b1ad9f"></div>
  <div style="position:absolute;left:1px;top:2px;width:199px;height:32px;background:#ebe8d8;border-left:2px solid #b1ad9f"></div>
  <div style="position:absolute;left:199px;top:2px;width:1px;height:33px;background:#fff"></div>
  <div style="position:absolute;left:200px;top:2px;width:1000px;height:32px;background:#ebe8d8;border-left:2px solid #b1ad9f"></div>
  <div style="position:absolute;left:0;top:35px;width:1202px;height:1px;background:#b1ad9f"></div>
</div>
</body></html>
